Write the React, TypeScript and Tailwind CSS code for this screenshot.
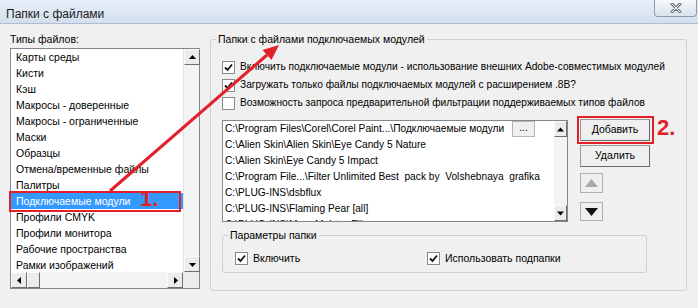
import React from 'react'

const fileTypes = [
  'Карты среды',
  'Кисти',
  'Кэш',
  'Макросы - доверенные',
  'Макросы - ограниченные',
  'Маски',
  'Образцы',
  'Отмена/временные файлы',
  'Палитры',
  'Подключаемые модули',
  'Профили CMYK',
  'Профили монитора',
  'Рабочие пространства',
  'Рамки изображений',
]

const folders = [
  'C:\\Program Files\\Corel\\Corel Paint...\\Подключаемые модули',
  'C:\\Alien Skin\\Alien Skin\\Eye Candy 5 Nature',
  'C:\\Alien Skin\\Eye Candy 5 Impact',
  'C:\\Program File...\\Filter Unlimited Best  pack by  Volshebnaya  grafika',
  'C:\\PLUG-INS\\dsbflux',
  'C:\\PLUG-INS\\Flaming Pear [all]',
  'C:\\PLUG-INS\\Mura Meister Filters',
]

const Check = ({ checked }: { checked: boolean }) => (
  <span className="w-[13px] h-[13px] bg-white border border-[#8a8a8a] shrink-0 flex items-center justify-center">
    {checked && (
      <svg width="9" height="9" viewBox="0 0 9 9">
        <path d="M1 4.5 L3.5 7 L8 1.5" fill="none" stroke="#111" strokeWidth="1.8" />
      </svg>
    )}
  </span>
)

const ScrollBtn = ({ dir }: { dir: 'up' | 'down' | 'left' | 'right' }) => {
  const d = {
    up: 'M1 6 L4.5 2 L8 6 Z',
    down: 'M1 3 L4.5 7 L8 3 Z',
    left: 'M6 1 L2 4.5 L6 8 Z',
    right: 'M3 1 L7 4.5 L3 8 Z',
  }[dir]
  return (
    <div className="w-[16px] h-[16px] bg-[#ececec] border border-t-[#fafafa] border-l-[#fafafa] border-r-[#6e6e6e] border-b-[#6e6e6e] flex items-center justify-center shrink-0">
      <svg width="9" height="9" viewBox="0 0 9 9">
        <path d={d} fill="#000" />
      </svg>
    </div>
  )
}

const Button = ({ children }: { children: React.ReactNode }) => (
  <div className="w-[70px] h-[22px] bg-[#efefef] border border-[#9a9a9a] border-r-[#6a6a6a] border-b-[#6a6a6a] flex items-center justify-center text-[10.5px] text-black">
    {children}
  </div>
)

export default function App() {
  return (
    <div className="w-[698px] h-[308px] relative overflow-hidden bg-[#f0f0f0] font-['Liberation_Sans','Arial',sans-serif] text-black">
      {/* title bar */}
      <div className="h-[24px] bg-gradient-to-b from-[#e8eff8] to-[#d3dfee] border-b border-[#aebcce] flex items-start justify-between">
        <span className="pl-[6px] pt-[5px] text-[12px] text-[#1b1b1b]">Папки с файлами</span>
        <div className="w-[43px] h-[17px] mr-[1px] rounded-b-[4px] border border-t-0 border-[#8c9cb0] bg-gradient-to-b from-[#f6f8fb] to-[#d9e2ee] flex items-center justify-center">
          <svg width="12" height="10" viewBox="0 0 12 10">
            <path d="M2 1 L10 9 M10 1 L2 9" stroke="#6f7780" strokeWidth="3" strokeLinecap="round" />
            <path d="M2 1 L10 9 M10 1 L2 9" stroke="#f4f6f9" strokeWidth="1" strokeLinecap="round" />
          </svg>
        </div>
      </div>

      <div className="flex pl-[10px] pt-[8px] h-[284px] border-l-[3px] border-[#d5e0ee] -ml-[3px]">
        {/* left column */}
        <div className="w-[190px] shrink-0 flex flex-col">
          <span className="h-[14px] leading-[14px] text-[10.5px]">Типы файлов:</span>
          <div className="mt-[2px] h-[241px] shrink-0 bg-white border border-[#828790] flex flex-col">
            <div className="flex h-[223px] shrink-0">
              <div className="flex-1 min-w-0 overflow-hidden">
                {fileTypes.map((t, i) => (
                  <div
                    key={t}
                    className={`h-[16px] leading-[16px] pl-[5px] text-[10.5px] whitespace-nowrap ${i === 9 ? 'bg-[#3399ff] text-white' : ''}`}
                  >
                    {t}
                  </div>
                ))}
              </div>
              <div className="w-[16px] shrink-0 flex flex-col bg-[#f3f3f3] border-l border-[#e2e2e2]">
                <ScrollBtn dir="up" />
                <div className="flex-1" />
                <ScrollBtn dir="down" />
              </div>
            </div>
            <div className="h-[16px] shrink-0 flex bg-[#f3f3f3]">
              <ScrollBtn dir="left" />
              <div className="w-[13px] h-[16px] bg-[#ececec] border border-t-[#fafafa] border-l-[#fafafa] border-r-[#6e6e6e] border-b-[#6e6e6e]" />
              <div className="flex-1" />
              <ScrollBtn dir="right" />
              <div className="w-[16px] bg-[#ececec]" />
            </div>
          </div>
        </div>

        {/* right group */}
        <fieldset className="ml-[10px] w-[477px] h-[259px] border border-[#cfcfcf] rounded-[3px] pl-[11px] pt-[12px]">
          <legend className="-ml-[6px] px-[2px] text-[10.5px] leading-[14px]">Папки с файлами подключаемых модулей</legend>
          <div className="flex flex-col text-[10.2px] whitespace-nowrap">
            <div className="h-[18px] flex items-center gap-[5px]">
              <Check checked />
              <span>Включить подключаемые модули - использование внешних Adobe-совместимых модулей</span>
            </div>
            <div className="h-[18px] flex items-center gap-[5px]">
              <Check checked />
              <span>Загружать только файлы подключаемых модулей с расширением .8B?</span>
            </div>
            <div className="h-[18px] flex items-center gap-[5px]">
              <Check checked={false} />
              <span>Возможность запроса предварительной фильтрации поддерживаемых типов файлов</span>
            </div>
          </div>

          <div className="flex mt-[8px] gap-[12px]">
            <div className="w-[346px] h-[102px] bg-white border border-[#828790] flex">
              <div className="flex-1 min-w-0 overflow-hidden">
                {folders.map((f, i) => (
                  <div key={f} className="h-[16px] leading-[16px] pl-[2px] text-[10.2px] whitespace-pre flex items-center">
                    <span className="flex-1 overflow-hidden">{f}</span>
                    {i === 0 && (
                      <span className="w-[23px] h-[16px] mr-[19px] bg-[#efefef] border border-[#b5b5b5] text-[10px] leading-[12px] text-center">...</span>
                    )}
                  </div>
                ))}
              </div>
              <div className="w-[13px] flex flex-col bg-[#f3f3f3]">
                <div className="w-[13px] h-[16px] bg-[#ececec] border border-t-[#fafafa] border-l-[#fafafa] border-r-[#6e6e6e] border-b-[#6e6e6e] flex items-center justify-center">
                  <svg width="7" height="5" viewBox="0 0 7 5"><path d="M0 4.5 L3.5 0.5 L7 4.5 Z" fill="#000" /></svg>
                </div>
                <div className="flex-1" />
                <div className="w-[13px] h-[16px] bg-[#ececec] border border-t-[#fafafa] border-l-[#fafafa] border-r-[#6e6e6e] border-b-[#6e6e6e] flex items-center justify-center">
                  <svg width="7" height="5" viewBox="0 0 7 5"><path d="M0 0.5 L3.5 4.5 L7 0.5 Z" fill="#000" /></svg>
                </div>
              </div>
            </div>

            <div className="flex flex-col -mt-[1px]">
              <Button>Добавить</Button>
              <div className="mt-[4px]">
                <Button>Удалить</Button>
              </div>
              <div className="mt-[6px] w-[23px] h-[20px] bg-[#efefef] border border-[#b0b0b0] flex items-center justify-center">
                <svg width="13" height="8" viewBox="0 0 13 8"><path d="M0 8 L6.5 0 L13 8 Z" fill="#a8a8a8" /></svg>
              </div>
              <div className="mt-[9px] w-[23px] h-[19px] bg-[#efefef] border border-[#b0b0b0] flex items-center justify-center">
                <svg width="13" height="8" viewBox="0 0 13 8"><path d="M0 0 L6.5 8 L13 0 Z" fill="#111" /></svg>
              </div>
            </div>
          </div>

          <fieldset className="mt-[6px] w-[425px] h-[45px] border border-[#cfcfcf] rounded-[3px] pl-[12px] pt-[9px]">
            <legend className="-ml-[7px] px-[2px] text-[10.5px] leading-[14px]">Параметры папки</legend>
            <div className="flex items-center text-[10.5px]">
              <div className="w-[192px] flex items-center gap-[5px]">
                <Check checked />
                <span>Включить</span>
              </div>
              <div className="flex items-center gap-[5px]">
                <Check checked />
                <span>Использовать подпапки</span>
              </div>
            </div>
          </fieldset>
        </fieldset>
      </div>

      {/* red annotations */}
      <svg className="absolute left-0 top-0 pointer-events-none" width="698" height="308" viewBox="0 0 698 308">
        <rect x="10" y="192" width="170" height="19" fill="none" stroke="#e3202a" strokeWidth="2" />
        <rect x="578" y="117" width="75" height="26" fill="none" stroke="#e3202a" strokeWidth="2" />
        <line x1="110" y1="191" x2="267" y2="55" stroke="#e3202a" strokeWidth="3" />
        <path d="M279 45 L271.5 60 L262.5 50 Z" fill="#e3202a" />
      </svg>
      <span className="absolute left-[140px] top-[187px] text-[22px] font-bold text-[#e3202a] leading-[24px]">1.</span>
      <span className="absolute left-[657px] top-[116px] text-[22px] font-bold text-[#e3202a] leading-[24px]">2.</span>
    </div>
  )
}
